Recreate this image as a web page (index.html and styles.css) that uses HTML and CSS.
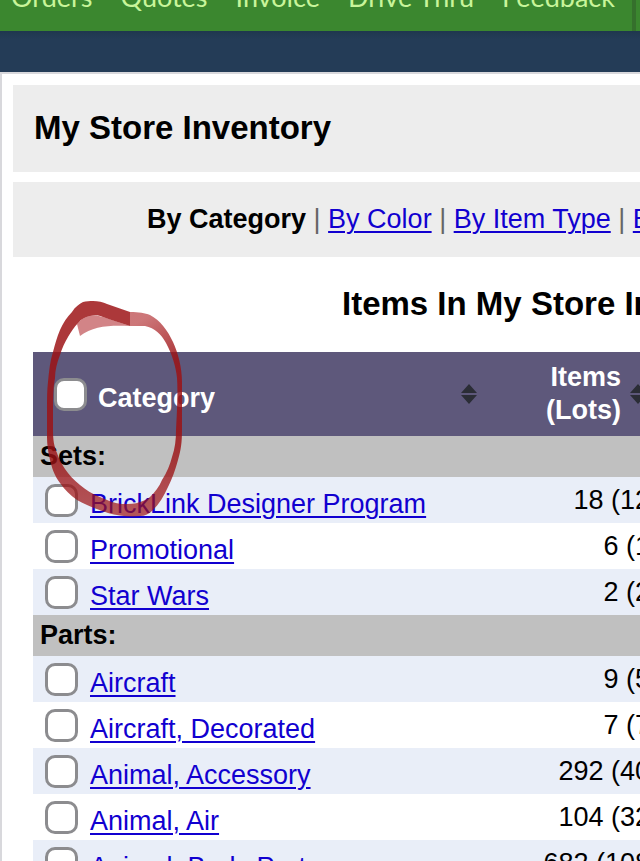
FILE: index.html
```html
<!DOCTYPE html>
<html lang="en">
<head>
    <meta charset="UTF-8">
    <meta name="viewport" content="width=device-width, initial-scale=1.0">
    <title>My Store Inventory</title>
    <link rel="stylesheet" href="styles.css">
</head>
<body>
    <nav class="top-nav">
        <div class="nav-links">
            <a href="#">Orders</a>
            <a href="#">Quotes</a>
            <a href="#">Invoice</a>
            <a href="#">Drive Thru</a>
            <a href="#">Feedback</a>
        </div>
    </nav>
    <div class="sub-bar"></div>

    <main class="page">
        <div class="panel title-panel">
            <h1>My Store Inventory</h1>
        </div>
        <div class="panel view-panel">
            <b>By Category</b> <span>|</span> <a href="#">By Color</a> <span>|</span> <a href="#">By Item Type</a> <span>|</span> <a href="#">By Condition</a>
        </div>

        <section class="inventory">
            <h2>Items In My Store Inventory</h2>
            <table>
                <colgroup>
                    <col class="col-check">
                    <col class="col-name">
                    <col class="col-items">
                </colgroup>
                <thead>
                    <tr>
                        <th colspan="2">
                            <div class="head-cell">
                                <input type="checkbox" id="all">
                                <label for="all">Category</label>
                                <svg class="sort" width="16" height="20" viewBox="0 0 16 20"><path d="M0 9L8 0L16 9ZM0 11H16L8 20Z"/></svg>
                            </div>
                        </th>
                        <th>
                            <div class="head-cell head-items">
                                <span>Items<br>(Lots)</span>
                                <svg class="sort" width="16" height="20" viewBox="0 0 16 20"><path d="M0 9L8 0L16 9ZM0 11H16L8 20Z"/></svg>
                            </div>
                        </th>
                    </tr>
                </thead>
                <tbody>
                    <tr class="group"><th colspan="3">Sets:</th></tr>
                    <tr class="shade">
                        <td><input type="checkbox" aria-labelledby="c1"></td>
                        <td><a href="#" id="c1">BrickLink Designer Program</a></td>
                        <td class="count">18 (12)</td>
                    </tr>
                    <tr>
                        <td><input type="checkbox" aria-labelledby="c2"></td>
                        <td><a href="#" id="c2">Promotional</a></td>
                        <td class="count">6 (1)</td>
                    </tr>
                    <tr class="shade">
                        <td><input type="checkbox" aria-labelledby="c3"></td>
                        <td><a href="#" id="c3">Star Wars</a></td>
                        <td class="count">2 (2)</td>
                    </tr>
                </tbody>
                <tbody>
                    <tr class="group"><th colspan="3">Parts:</th></tr>
                    <tr class="shade">
                        <td><input type="checkbox" aria-labelledby="c4"></td>
                        <td><a href="#" id="c4">Aircraft</a></td>
                        <td class="count">9 (5)</td>
                    </tr>
                    <tr>
                        <td><input type="checkbox" aria-labelledby="c5"></td>
                        <td><a href="#" id="c5">Aircraft, Decorated</a></td>
                        <td class="count">7 (7)</td>
                    </tr>
                    <tr class="shade">
                        <td><input type="checkbox" aria-labelledby="c6"></td>
                        <td><a href="#" id="c6">Animal, Accessory</a></td>
                        <td class="count">292 (40)</td>
                    </tr>
                    <tr>
                        <td><input type="checkbox" aria-labelledby="c7"></td>
                        <td><a href="#" id="c7">Animal, Air</a></td>
                        <td class="count">104 (32)</td>
                    </tr>
                    <tr class="shade">
                        <td><input type="checkbox" aria-labelledby="c8"></td>
                        <td><a href="#" id="c8">Animal, Body Part</a></td>
                        <td class="count">682 (108)</td>
                    </tr>
                </tbody>
            </table>

            <!-- hand drawn marker around the select-all box -->
            <svg class="marker" width="140" height="220" viewBox="45 299 140 220">
                <defs>
                    <linearGradient id="ink" gradientUnits="userSpaceOnUse" x1="145" y1="318" x2="172" y2="362">
                        <stop offset="0" stop-color="#a81418" stop-opacity=".58"/>
                        <stop offset="1" stop-color="#9c1214" stop-opacity=".84"/>
                    </linearGradient>
                    <linearGradient id="ink2" gradientUnits="userSpaceOnUse" x1="0" y1="440" x2="0" y2="510">
                        <stop offset="0" stop-color="#9c1214" stop-opacity=".84"/>
                        <stop offset="1" stop-color="#9c1214" stop-opacity=".7"/>
                    </linearGradient>
                </defs>
                <path fill="#a81418" fill-opacity=".52" d="M80 336L77 324C81 319 85 317 90 316C95 315 99 316 103 317L130 326C110 325 93 326 80 336Z"/>
                <path fill="url(#ink)" d="M130 312C139 312 145 313 150 315C160 320 168 331 173 342C178 353 182 367 182 382V430H176C177 412 178 393 177 378C176 367 172 354 166 343C161 334 155 328 145 326H130Z"/>
                <path fill="url(#ink2)" d="M182 430C182 442 181 450 178 460C175 471 172 479 168 487C164 496 159 504 153 510C149 514 145 516 140 516C130 517 118 516 108 513C96 509 86 505 77 500C70 495 65 490 60 483C54 475 52 468 50 460C48 452 47 444 47 437V430H53C53 440 54 446 57 453C59 459 61 463 65 469C69 475 74 480 80 485C86 490 92 494 100 497C107 500 115 504 123 504C129 504 135 504 140 502C144 501 147 499 150 497C155 492 159 487 162 480C167 472 170 465 172 457C175 448 176 440 176 430Z"/>
                <path fill="#9c1214" fill-opacity=".84" d="M47 430V408C47 399 47 390 48 382C49 371 50 361 53 352C55 344 57 337 60 330C63 323 67 317 72 312C75 307 79 304 83 302C86 301 90 301 93 301C98 301 103 302 107 304L130 312V326C121 323 111 320 103 317C99 315 94 315 90 316C85 317 81 319 78 323C74 327 71 332 68 337C65 342 62 348 60 355C57 363 55 370 55 378C53 388 53 398 53 408V430Z"/>
            </svg>
        </section>
    </main>
</body>
</html>
```

FILE: styles.css
```css
* {
    box-sizing: border-box;
}

body {
    margin: 0;
    background-color: white;
    color: black;
    font-family: "Liberation Sans", Arial, sans-serif;
    font-size: 27px;
    line-height: 33px;
    overflow: hidden;
    height: 100vh;
}

a {
    color: #1100d0;
    text-decoration-thickness: 2px;
    text-underline-offset: 3px;
}

.top-nav {
    display: flex;
    align-items: flex-end;
    height: 31px;
    background-color: #3b872f;
    overflow: hidden;
}

.nav-links {
    display: flex;
    gap: 28px;
    padding: 0 17px 18px 11px;
    border-right: 4px solid #35702c;
    white-space: nowrap;
}

.nav-links a {
    color: #c8f59a;
    font-family: Lato, sans-serif;
    font-size: 27px;
    text-decoration: none;
}

.sub-bar {
    height: 41px;
    background: linear-gradient(#1f374e, #243c57 8px);
}

.page {
    padding: 11px 0 0 11px;
    border-top: 2px solid #d8d8dc;
    border-left: 2px solid #d8d8dc;
}

.panel {
    margin-bottom: 10px;
    background-color: #ededed;
    white-space: nowrap;
    overflow: hidden;
}

.title-panel {
    padding: 26px 21px 28px;
}

h1, h2 {
    margin: 0;
    font-size: 33px;
    line-height: 33px;
}

.view-panel {
    padding: 21px 0 21px 134px;
}

.view-panel span {
    color: #666;
}

.inventory {
    position: relative;
    padding-left: 20px;
    overflow: hidden;
}

h2 {
    padding: 20px 0 32px 309px;
    white-space: nowrap;
}

table {
    width: 660px;
    border-collapse: collapse;
    table-layout: fixed;
}

.col-check {
    width: 57px;
}

.col-name {
    width: 400px;
}

th, td {
    padding: 0;
    text-align: left;
}

thead th {
    height: 84px;
    background-color: #5e587b;
    color: white;
}

.head-cell {
    display: flex;
    align-items: center;
    gap: 11px;
    padding: 0 13px 0 21px;
}

.head-cell label {
    padding-top: 8px;
}

.head-cell .sort {
    margin-left: auto;
    fill: #2b2d36;
}

.head-items {
    gap: 9px;
    padding: 0 47px 0 0;
    text-align: right;
}

.head-items span {
    margin-left: auto;
}

.head-items .sort {
    margin-left: 0;
}

.group th {
    height: 41px;
    padding-left: 7px;
    background-color: #c0c0c0;
}

td {
    height: 46px;
    vertical-align: middle;
}

td a {
    display: inline-block;
    padding-top: 8px;
}

.shade {
    background-color: #e9eef8;
}

.count {
    padding-right: 34px;
    text-align: right;
}

input[type="checkbox"] {
    appearance: none;
    display: block;
    width: 33px;
    height: 33px;
    margin: 0;
    border: 3px solid #8c8c8f;
    border-radius: 10px;
    background-color: white;
}

td input[type="checkbox"] {
    margin-left: 12px;
}

input[type="checkbox"]:checked {
    background-color: #1a73e8;
}

.marker {
    position: absolute;
    top: 32px;
    left: 32px;
}
```
